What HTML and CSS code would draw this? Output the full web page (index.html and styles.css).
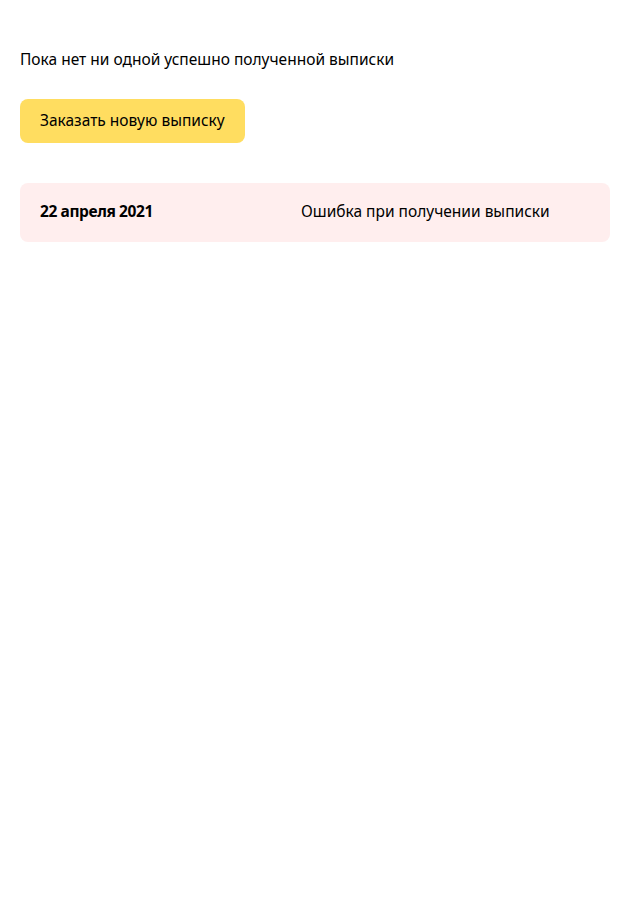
FILE: index.html
```html
<!DOCTYPE html>
<html lang="ru">
<head>
<meta charset="utf-8">
<link rel="stylesheet" href="styles.css">
</head>
<body>
<main class="page">
  <p class="empty">Пока нет ни одной успешно полученной выписки</p>
  <button class="order-btn" type="button">Заказать новую выписку</button>
  <div class="list">
    <div class="row row-error">
      <span class="date">22 апреля 2021</span>
      <span class="status">Ошибка при получении выписки</span>
    </div>
  </div>
</main>
</body>
</html>
```

FILE: styles.css
```css
html, body {
  margin: 0;
  padding: 0;
  background: #fff;
}
body {
  font-family: "Noto Sans", "Open Sans", Arial, sans-serif;
  color: #000;
  font-size: 15.5px;
}
.page {
  padding: 49px 20px 20px;
  display: flex;
  flex-direction: column;
  align-items: flex-start;
}
.empty {
  margin: 0;
  line-height: 20px;
}
.order-btn {
  margin-top: 30px;
  height: 44px;
  padding: 0 20px 2px;
  border: none;
  border-radius: 8px;
  background: #ffdd60;
  font: inherit;
  color: #000;
  cursor: pointer;
}
.list {
  margin-top: 40px;
  align-self: stretch;
}
.row {
  display: grid;
  grid-template-columns: 261px 1fr;
  align-items: center;
  height: 59px;
  padding: 0 20px 3px;
  box-sizing: border-box;
  border-radius: 8px;
}
.row-error {
  background: #ffeeee;
}
.date {
  font-weight: 700;
  letter-spacing: -0.4px;
}
```
